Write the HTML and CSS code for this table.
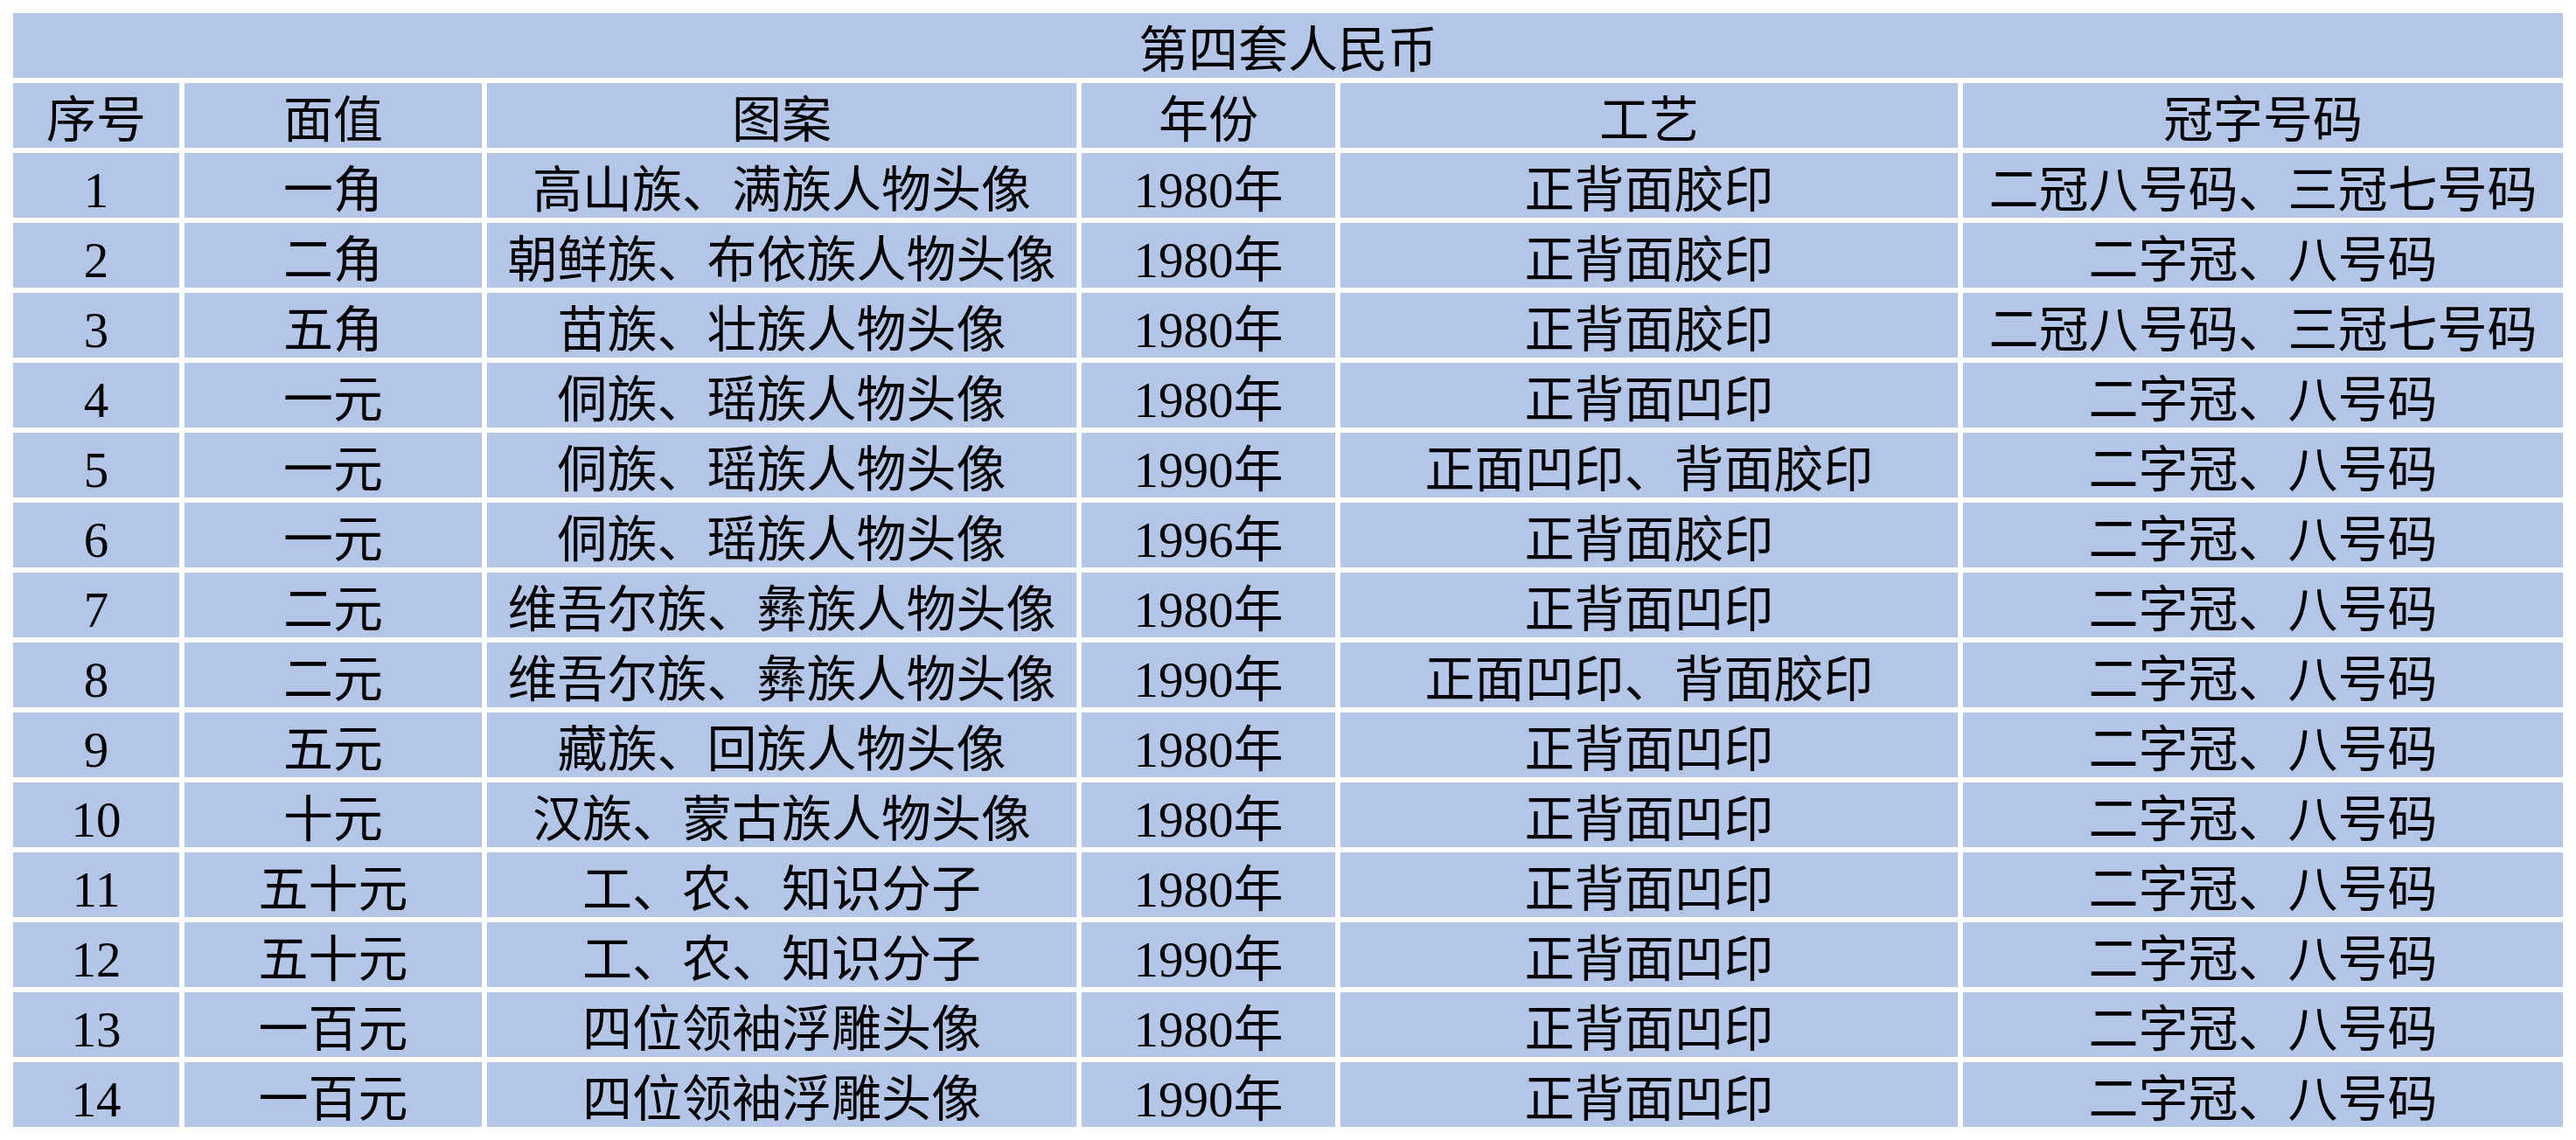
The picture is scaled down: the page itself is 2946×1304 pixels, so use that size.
FILE: index.html
```html
<!DOCTYPE html>
<html lang="zh-CN">
<head>
<meta charset="utf-8">
<title>第四套人民币</title>
<link rel="stylesheet" href="styles.css">
</head>
<body>
<div class="sheet">
  <div class="cell title">第四套人民币</div>
  <div class="cell">序号</div><div class="cell">面值</div><div class="cell">图案</div><div class="cell">年份</div><div class="cell">工艺</div><div class="cell">冠字号码</div>
  <div class="cell">1</div><div class="cell">一角</div><div class="cell">高山族、满族人物头像</div><div class="cell">1980年</div><div class="cell">正背面胶印</div><div class="cell">二冠八号码、三冠七号码</div>
  <div class="cell">2</div><div class="cell">二角</div><div class="cell">朝鲜族、布依族人物头像</div><div class="cell">1980年</div><div class="cell">正背面胶印</div><div class="cell">二字冠、八号码</div>
  <div class="cell">3</div><div class="cell">五角</div><div class="cell">苗族、壮族人物头像</div><div class="cell">1980年</div><div class="cell">正背面胶印</div><div class="cell">二冠八号码、三冠七号码</div>
  <div class="cell">4</div><div class="cell">一元</div><div class="cell">侗族、瑶族人物头像</div><div class="cell">1980年</div><div class="cell">正背面凹印</div><div class="cell">二字冠、八号码</div>
  <div class="cell">5</div><div class="cell">一元</div><div class="cell">侗族、瑶族人物头像</div><div class="cell">1990年</div><div class="cell">正面凹印、背面胶印</div><div class="cell">二字冠、八号码</div>
  <div class="cell">6</div><div class="cell">一元</div><div class="cell">侗族、瑶族人物头像</div><div class="cell">1996年</div><div class="cell">正背面胶印</div><div class="cell">二字冠、八号码</div>
  <div class="cell">7</div><div class="cell">二元</div><div class="cell">维吾尔族、彝族人物头像</div><div class="cell">1980年</div><div class="cell">正背面凹印</div><div class="cell">二字冠、八号码</div>
  <div class="cell">8</div><div class="cell">二元</div><div class="cell">维吾尔族、彝族人物头像</div><div class="cell">1990年</div><div class="cell">正面凹印、背面胶印</div><div class="cell">二字冠、八号码</div>
  <div class="cell">9</div><div class="cell">五元</div><div class="cell">藏族、回族人物头像</div><div class="cell">1980年</div><div class="cell">正背面凹印</div><div class="cell">二字冠、八号码</div>
  <div class="cell">10</div><div class="cell">十元</div><div class="cell">汉族、蒙古族人物头像</div><div class="cell">1980年</div><div class="cell">正背面凹印</div><div class="cell">二字冠、八号码</div>
  <div class="cell">11</div><div class="cell">五十元</div><div class="cell">工、农、知识分子</div><div class="cell">1980年</div><div class="cell">正背面凹印</div><div class="cell">二字冠、八号码</div>
  <div class="cell">12</div><div class="cell">五十元</div><div class="cell">工、农、知识分子</div><div class="cell">1990年</div><div class="cell">正背面凹印</div><div class="cell">二字冠、八号码</div>
  <div class="cell">13</div><div class="cell">一百元</div><div class="cell">四位领袖浮雕头像</div><div class="cell">1980年</div><div class="cell">正背面凹印</div><div class="cell">二字冠、八号码</div>
  <div class="cell">14</div><div class="cell">一百元</div><div class="cell">四位领袖浮雕头像</div><div class="cell">1990年</div><div class="cell">正背面凹印</div><div class="cell">二字冠、八号码</div>
</div>
</body>
</html>
```

FILE: styles.css
```css
html, body {
  margin: 0;
  padding: 0;
  background: #ffffff;
}

.sheet {
  display: grid;
  grid-template-columns: 190px 340px 674px 290px 706px 686px;
  grid-auto-rows: 74px;
  gap: 6px;
  padding: 15px;
  width: max-content;
}

.cell {
  background: #b4c6e7;
  color: #000000;
  font-family: "Liberation Serif", "Noto Sans CJK SC", serif;
  font-size: 57px;
  line-height: 56px;
  padding: 15px 0 3px;
  box-sizing: border-box;
  text-align: center;
  white-space: nowrap;
  overflow: hidden;
}

.title {
  grid-column: 1 / -1;
}
```
